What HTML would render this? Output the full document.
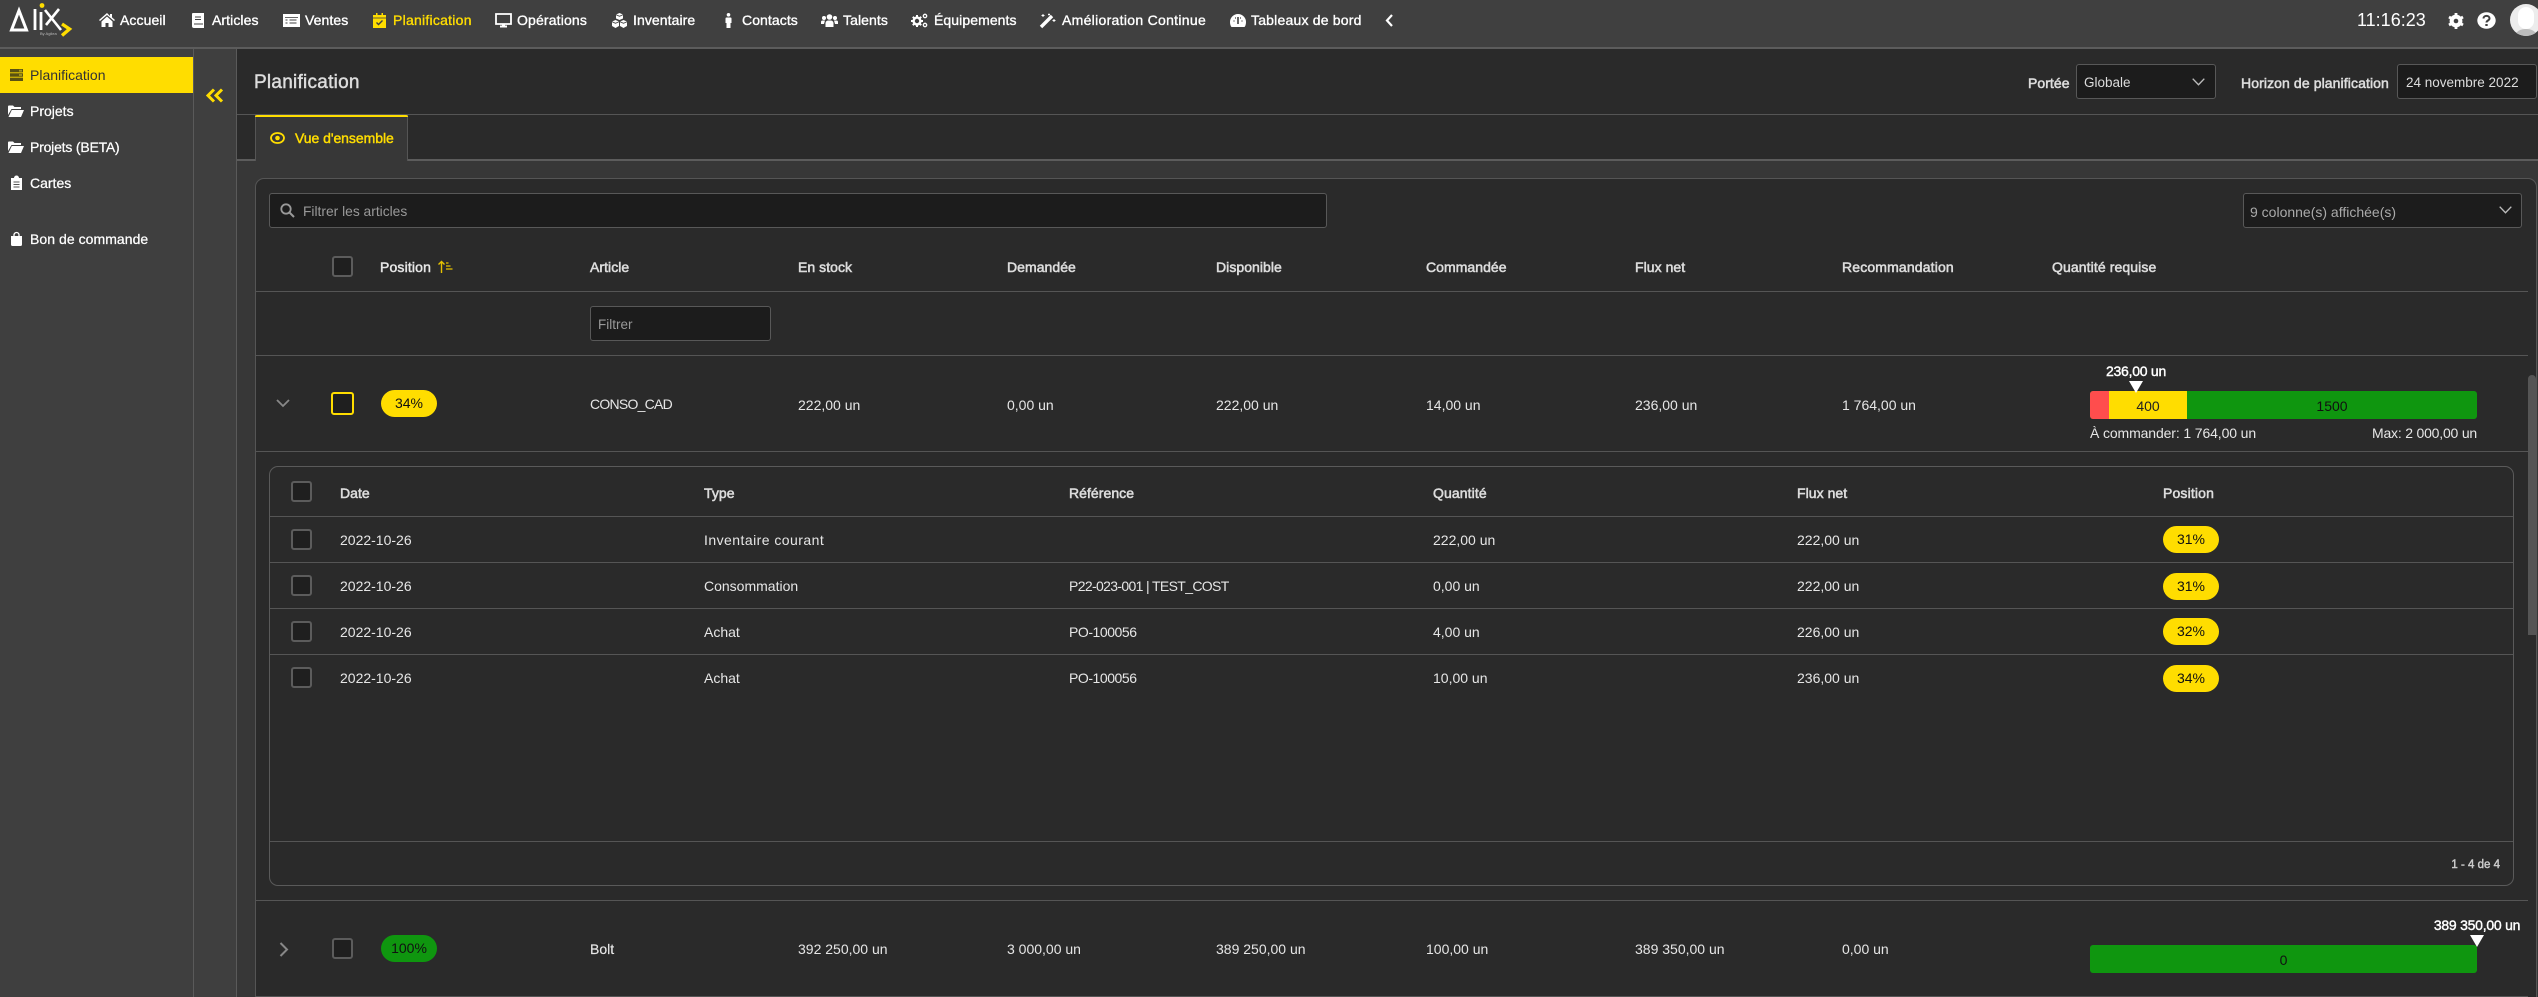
<!DOCTYPE html>
<html lang="fr"><head><meta charset="utf-8"><title>Planification</title>
<style>
html,body{margin:0;padding:0;width:2538px;height:997px;overflow:hidden;background:#2a2a2a}
body{position:relative;font-family:"Liberation Sans",sans-serif;font-size:14px;color:#e6e6e6}
div,span,svg{position:absolute;box-sizing:border-box}
.t{white-space:nowrap;line-height:20px;height:20px}
.n{color:#fff;-webkit-text-stroke:.35px #fff;top:10px;letter-spacing:.08px}
.s{color:#fff;-webkit-text-stroke:.25px #fff}
.h{color:#ddd;-webkit-text-stroke:.55px #ddd;letter-spacing:.05px}
.l{height:1px;background:#555}
.cb{width:21px;height:21px;background:#1f1f1f;border:2px solid #5c5c5c;border-radius:3px}
.b{width:56px;height:27px;border-radius:13.5px;background:#ffdd00;color:#111;text-align:center;line-height:27px}
.i{overflow:visible}
.input{background:#1c1c1c;border:1px solid #585858;border-radius:3px}
</style></head><body>

<!-- top bar -->
<div style="left:0;top:0;width:2538px;height:47px;background:#404040"></div>
<div style="left:0;top:47px;width:2538px;height:2px;background:#5c5c5c"></div>

<!-- logo -->
<svg class="i" style="left:8px;top:2px" width="66" height="36" viewBox="0 0 66 36">
<path d="M3.500 28 L11 8.500 L18.500 28 Z" fill="none" stroke="#fff" stroke-width="3"/>
<path d="M27 7V28" fill="none" stroke="#fff" stroke-width="2.800"/>
<path d="M33 10V28" fill="none" stroke="#fff" stroke-width="2.800"/>
<path d="M37 8L53 28M51 7L38 23" fill="none" stroke="#fff" stroke-width="2.600"/>
<circle cx="34" cy="3.500" r="2.400" fill="#ffdd00"/>
<path d="M54 22L61.500 27L54 33.500" fill="none" stroke="#ffdd00" stroke-width="3.400"/>
</svg>
<span class="t" style="left:40px;top:31px;font-size:4px;line-height:6px;height:6px;color:#bbb">By Agilea</span>

<!-- nav icons -->
<svg class="i" style="left:99px;top:13px" width="16" height="14" viewBox="0 0 16 14"><path d="M8 0L0 7l1 1 7-6 7 6 1-1-3-2.600V1h-2v2zM2.500 8.500V14h4v-4h3v4h4V8.500L8 3.500z" fill="#fff"/></svg>
<svg class="i" style="left:192px;top:13px" width="12" height="15" viewBox="0 0 12 15"><path d="M1 0h11v15H2a2 2 0 0 1-2-2V1a1 1 0 0 1 1-1z" fill="#fff"/><path d="M2 11h9M3 4h6M3 6.500h6" stroke="#404040" stroke-width="1"/></svg>
<svg class="i" style="left:283px;top:14px" width="17" height="13" viewBox="0 0 17 13"><path d="M0 0h17v13H0z" fill="#fff"/><path d="M2 3h13v.8H2z" fill="#404040"/><path d="M2.500 6h2M2.500 9h2M6.500 6h7M6.500 9h7" stroke="#404040" stroke-width="1.100"/></svg>
<svg class="i" style="left:373px;top:13px" width="13" height="15" viewBox="0 0 13 15"><path d="M3 0h1.500v2h4V0H10v2h3v13H0V2h3z" fill="#ffdd00"/><path d="M0 5h13" stroke="#404040" stroke-width=".8"/><path d="M3.500 9.500l2 2L9.500 7.500" stroke="#404040" stroke-width="1.400" fill="none"/></svg>
<svg class="i" style="left:495px;top:13px" width="17" height="15" viewBox="0 0 17 15"><path d="M1 1h15v10H1z" fill="none" stroke="#fff" stroke-width="1.800"/><path d="M5 13.500h7" stroke="#fff" stroke-width="2"/><path d="M7 11h3v2H7z" fill="#fff"/></svg>
<svg class="i" style="left:612px;top:13px" width="15" height="15" viewBox="0 0 15 15"><path d="M7.500 0l3.500 1.500v4L7.500 7 4 5.500v-4zM3.500 7L7 8.500v4.500L3.500 15 0 13V8.500zM11.500 7L15 8.500V13l-3.500 2L8 13V8.500z" fill="#fff"/><path d="M4 1.700l3.500 1.600L11 1.700M0 8.700l3.500 1.600L7 8.700M8 8.700l3.500 1.600L15 8.700" fill="none" stroke="#404040" stroke-width=".8"/></svg>
<svg class="i" style="left:725px;top:13px" width="7" height="15" viewBox="0 0 7 15"><circle cx="3.500" cy="1.800" r="1.800" fill="#fff"/><path d="M1.500 4.500h4a1 1 0 0 1 1 1v4.500H5.500V15h-4V10H.5V5.500a1 1 0 0 1 1-1z" fill="#fff"/></svg>
<svg class="i" style="left:821px;top:14px" width="17" height="13" viewBox="0 0 17 13"><circle cx="8.500" cy="3" r="2.800" fill="#fff"/><circle cx="3" cy="4" r="2" fill="#fff"/><circle cx="14" cy="4" r="2" fill="#fff"/><path d="M4.500 13V9a3 3 0 0 1 3-2.500h2A3 3 0 0 1 12.500 9v4zM0 10V8a1.500 1.500 0 0 1 1.500-1.500H4L3 10zM17 10V8a1.500 1.500 0 0 0-1.500-1.500H13l1 3.500z" fill="#fff"/></svg>
<svg class="i" style="left:911px;top:13px" width="17" height="15" viewBox="0 0 17 15"><circle cx="6" cy="8" r="3.400" fill="none" stroke="#fff" stroke-width="2.400"/><path d="M6 2v2M6 12v2M0 8h2M10 8h2M1.800 3.800l1.400 1.400M8.800 10.800l1.400 1.400M10.200 3.800L8.800 5.200M3.200 10.800l-1.400 1.400" stroke="#fff" stroke-width="2"/><circle cx="14" cy="3" r="1.700" fill="none" stroke="#fff" stroke-width="1.300"/><circle cx="14" cy="12" r="1.700" fill="none" stroke="#fff" stroke-width="1.300"/></svg>
<svg class="i" style="left:1040px;top:13px" width="16" height="15" viewBox="0 0 16 15"><path d="M1 14L12 3" stroke="#fff" stroke-width="3.400"/><path d="M3 1v3M1.500 2.500h3M9 .5v2M8 1.500h2M14 6v3M12.500 7.500h3" stroke="#fff" stroke-width="1"/></svg>
<svg class="i" style="left:1230px;top:13px" width="16" height="15" viewBox="0 0 16 15"><path d="M0 9a8 8 0 0 1 16 0c0 2-.5 4-1.500 5h-13C.5 13 0 11 0 9z" fill="#fff"/><path d="M8 11V4" stroke="#404040" stroke-width="1.600"/><path d="M3.500 8h1M11.500 8h1M5 5h1M10 5h1" stroke="#404040" stroke-width="1.200"/></svg>
<svg class="i" style="left:1385px;top:14px" width="8" height="13" viewBox="0 0 8 13"><path d="M7 1L2 6.500 7 12" fill="none" stroke="#fff" stroke-width="2.200"/></svg>

<span class="t n" style="left:120px">Accueil</span>
<span class="t n" style="left:212px">Articles</span>
<span class="t n" style="left:305px">Ventes</span>
<span class="t n" style="left:393px;color:#ffdd00;-webkit-text-stroke:.35px #ffdd00;letter-spacing:.25px">Planification</span>
<span class="t n" style="left:517px;letter-spacing:.15px">Opérations</span>
<span class="t n" style="left:633px">Inventaire</span>
<span class="t n" style="left:742px">Contacts</span>
<span class="t n" style="left:843px">Talents</span>
<span class="t n" style="left:934px">Équipements</span>
<span class="t n" style="left:1062px;letter-spacing:.3px">Amélioration Continue</span>
<span class="t n" style="left:1251px;letter-spacing:.2px">Tableaux de bord</span>

<span class="t" style="left:2357px;top:10px;font-size:18px;color:#fff">11:16:23</span>
<svg class="i" style="left:2447px;top:13px" width="18" height="16" viewBox="0 0 18 16"><circle cx="9" cy="8" r="4.600" fill="none" stroke="#fff" stroke-width="3.600"/><path d="M9 0v16M2 4l14 8M16 4L2 12" stroke="#fff" stroke-width="2.800"/><circle cx="9" cy="8" r="2.300" fill="#404040"/></svg>
<svg class="i" style="left:2477px;top:12px" width="19" height="17" viewBox="0 0 19 17"><ellipse cx="9.500" cy="8.500" rx="9.200" ry="8.300" fill="#fff"/><path d="M6.500 6.500c0-3.500 6-3.500 6 0 0 2-3 2-3 4" fill="none" stroke="#404040" stroke-width="2"/><path d="M8.300 12h2.400v2H8.300z" fill="#404040"/></svg>
<div style="left:2510px;top:4px;width:32px;height:32px;border-radius:50%;background:#ececec;overflow:hidden">
<div style="left:8px;top:3px;width:16px;height:22px;border-radius:8px;background:#fff"></div>
<div style="left:3px;top:25px;width:26px;height:12px;border-radius:12px 12px 0 0;background:#bdbdbd"></div></div>

<!-- sidebar -->
<div style="left:0;top:49px;width:237px;height:948px;background:#3f3f3f"></div>
<div style="left:193px;top:49px;width:1px;height:948px;background:#5a5a5a"></div>
<div style="left:236px;top:49px;width:1px;height:948px;background:#5a5a5a"></div>
<div style="left:0;top:57px;width:193px;height:36px;background:#ffdd00"></div>
<svg class="i" style="left:10px;top:69px" width="13" height="12" viewBox="0 0 13 12"><path d="M0 0h13v3.400H0zM0 4.300h13v3.400H0zM0 8.600h13V12H0z" fill="#5b5212"/><path d="M9 .8h3v1.800H9zM9 5.100h3v1.800H9z" fill="#a89a1a"/></svg>
<span class="t" style="left:30px;top:65px;color:#333">Planification</span>
<svg class="i" style="left:8px;top:105px" width="16" height="12" viewBox="0 0 16 12"><path d="M0 1.500A1 1 0 0 1 1 .5h4l1.500 1.500H13v2H3.500L0 10z" fill="#fff"/><path d="M3.800 5H16l-3 7H.5z" fill="#fff"/></svg>
<svg class="i" style="left:8px;top:141px" width="16" height="12" viewBox="0 0 16 12"><path d="M0 1.500A1 1 0 0 1 1 .5h4l1.500 1.500H13v2H3.500L0 10z" fill="#fff"/><path d="M3.800 5H16l-3 7H.5z" fill="#fff"/></svg>
<svg class="i" style="left:11px;top:176px" width="11" height="14" viewBox="0 0 11 14"><path d="M0 2h3a2.500 2.500 0 0 1 5 0h3v12H0z" fill="#fff"/><path d="M2.500 6h6M2.500 8.500h6M2.500 11h6" stroke="#555" stroke-width="1"/></svg>
<svg class="i" style="left:11px;top:232px" width="11" height="14" viewBox="0 0 11 14"><path d="M0 4h11v8.500a1.500 1.500 0 0 1-1.500 1.500h-8A1.500 1.500 0 0 1 0 12.500z" fill="#fff"/><path d="M3 5V3a2.500 2.500 0 0 1 5 0v2" fill="none" stroke="#fff" stroke-width="1.300"/></svg>
<span class="t s" style="left:30px;top:101px">Projets</span>
<span class="t s" style="left:30px;top:137px;letter-spacing:-.2px">Projets (BETA)</span>
<span class="t s" style="left:30px;top:173px">Cartes</span>
<span class="t s" style="left:30px;top:229px;letter-spacing:.05px">Bon de commande</span>
<svg class="i" style="left:206px;top:88px" width="18" height="15" viewBox="0 0 18 15"><path d="M8 1.500L2 7.500l6 6M16 1.500l-6 6 6 6" fill="none" stroke="#ffdd00" stroke-width="3"/></svg>

<!-- header -->
<span class="t h" style="left:254px;top:73px;font-size:19px;letter-spacing:.25px;-webkit-text-stroke:.45px #ddd">Planification</span>
<span class="t h" style="left:2028px;top:73px">Portée</span>
<div class="input" style="left:2076px;top:64px;width:140px;height:35px"></div>
<span class="t" style="left:2084px;top:73px;color:#ddd;font-size:13.500px">Globale</span>
<svg class="i" style="left:2192px;top:78px" width="13" height="8" viewBox="0 0 13 8"><path d="M.7.7l5.800 6 5.800-6" fill="none" stroke="#bbb" stroke-width="1.400"/></svg>
<span class="t h" style="left:2241px;top:73px;letter-spacing:.1px">Horizon de planification</span>
<div class="input" style="left:2397px;top:64px;width:140px;height:35px"></div>
<span class="t" style="left:2406px;top:73px;color:#ddd;font-size:13.500px">24 novembre 2022</span>
<div class="l" style="left:237px;top:114px;width:2301px"></div>

<!-- tabs -->
<div style="left:237px;top:161px;width:2301px;height:836px;background:#373737"></div>
<div style="left:237px;top:159px;width:2301px;height:2px;background:#5c5c5c"></div>
<div style="left:255px;top:115px;width:153px;height:46px;background:#373737;border-left:1px solid #555;border-right:1px solid #555"></div>
<div style="left:255px;top:115px;width:153px;height:2px;background:#ffdd00;border-radius:2px 2px 0 0"></div>
<svg class="i" style="left:270px;top:132px" width="15" height="12" viewBox="0 0 15 12"><ellipse cx="7.500" cy="6" rx="6.500" ry="5" fill="none" stroke="#ffdd00" stroke-width="1.800"/><circle cx="7.500" cy="6" r="2.300" fill="#ffdd00"/></svg>
<span class="t" style="left:295px;top:128px;color:#ffdd00;-webkit-text-stroke:.45px #ffdd00;letter-spacing:-.05px">Vue d'ensemble</span>

<!-- panel -->
<div style="left:255px;top:178px;width:2282px;height:830px;background:#2a2a2a;border:1px solid #555;border-radius:9px"></div>
<div class="input" style="left:269px;top:193px;width:1058px;height:35px"></div>
<svg class="i" style="left:280px;top:203px" width="15" height="15" viewBox="0 0 15 15"><circle cx="6" cy="6" r="4.700" fill="none" stroke="#999" stroke-width="1.800"/><path d="M9.500 9.500L14 14" stroke="#999" stroke-width="2"/></svg>
<span class="t" style="left:303px;top:202px;color:#999;font-size:13.800px">Filtrer les articles</span>
<div class="input" style="left:2243px;top:193px;width:279px;height:35px"></div>
<span class="t" style="left:2250px;top:202px;color:#aaa">9 colonne(s) affichée(s)</span>
<svg class="i" style="left:2499px;top:206px" width="13" height="8" viewBox="0 0 13 8"><path d="M.7.7l5.800 6 5.800-6" fill="none" stroke="#bbb" stroke-width="1.400"/></svg>

<!-- column headers -->
<div class="cb" style="left:332px;top:256px"></div>
<span class="t h" style="left:380px;top:257px;color:#eee;letter-spacing:.15px">Position</span>
<svg class="i" style="left:438px;top:261px" width="16" height="12" viewBox="0 0 16 12"><path d="M3.500 12V1M.5 3.500l3-3 3 3" fill="none" stroke="#e6c200" stroke-width="1.400"/><path d="M8 2h2.500M8 5h4.500M8 8h6.500" stroke="#e6c200" stroke-width="1.300"/></svg>
<span class="t h" style="left:590px;top:257px">Article</span>
<span class="t h" style="left:798px;top:257px">En stock</span>
<span class="t h" style="left:1007px;top:257px">Demandée</span>
<span class="t h" style="left:1216px;top:257px">Disponible</span>
<span class="t h" style="left:1426px;top:257px">Commandée</span>
<span class="t h" style="left:1635px;top:257px">Flux net</span>
<span class="t h" style="left:1842px;top:257px;letter-spacing:.15px">Recommandation</span>
<span class="t h" style="left:2052px;top:257px;letter-spacing:.1px">Quantité requise</span>
<div class="l" style="left:256px;top:291px;width:2272px"></div>
<div class="input" style="left:590px;top:306px;width:181px;height:35px"></div>
<span class="t" style="left:598px;top:315px;color:#999;font-size:13.500px">Filtrer</span>
<div class="l" style="left:256px;top:355px;width:2272px"></div>

<!-- row 1 -->
<svg class="i" style="left:276px;top:399px" width="14" height="9" viewBox="0 0 14 9"><path d="M1 1l6 6 6-6" fill="none" stroke="#888" stroke-width="1.800"/></svg>
<div class="cb" style="left:331px;top:392px;width:23px;height:23px;border-color:#ffdd00"></div>
<div class="b" style="left:381px;top:390px">34%</div>
<span class="t" style="left:590px;top:394px;letter-spacing:-.75px">CONSO_CAD</span>
<span class="t" style="left:798px;top:395px">222,00 un</span>
<span class="t" style="left:1007px;top:395px">0,00 un</span>
<span class="t" style="left:1216px;top:395px">222,00 un</span>
<span class="t" style="left:1426px;top:395px">14,00 un</span>
<span class="t" style="left:1635px;top:395px">236,00 un</span>
<span class="t" style="left:1842px;top:395px">1 764,00 un</span>

<span class="t" style="left:2036px;width:200px;text-align:center;top:361px;color:#fff;-webkit-text-stroke:.4px #fff;letter-spacing:-.25px">236,00 un</span>
<div style="left:2090px;top:391px;width:387px;height:28px;background:#0f960f;border-radius:3px;overflow:hidden">
<div style="left:0;top:0;width:19px;height:28px;background:#ff4d4d"></div>
<div style="left:19px;top:0;width:78px;height:28px;background:#ffdd00"></div></div>
<svg class="i" style="left:2129px;top:381px" width="14" height="12" viewBox="0 0 14 12"><path d="M0 0h14L7 12z" fill="#fff"/></svg>
<span class="t" style="left:2109px;width:78px;text-align:center;top:396px;color:#222">400</span>
<span class="t" style="left:2187px;width:290px;text-align:center;top:396px;color:#111">1500</span>
<span class="t" style="left:2090px;top:423px;letter-spacing:-.12px">À commander: 1 764,00 un</span>
<span class="t" style="right:61px;top:423px;letter-spacing:-.2px">Max: 2 000,00 un</span>
<div class="l" style="left:256px;top:451px;width:2272px"></div>

<!-- sub table -->
<div style="left:269px;top:466px;width:2245px;height:420px;border:1px solid #5a5a5a;border-radius:9px"></div>
<div class="cb" style="left:291px;top:481px"></div>
<span class="t h" style="left:340px;top:483px">Date</span>
<span class="t h" style="left:704px;top:483px">Type</span>
<span class="t h" style="left:1069px;top:483px">Référence</span>
<span class="t h" style="left:1433px;top:483px;letter-spacing:.1px">Quantité</span>
<span class="t h" style="left:1797px;top:483px">Flux net</span>
<span class="t h" style="left:2163px;top:483px;letter-spacing:.15px">Position</span>
<div class="l" style="left:270px;top:516px;width:2243px"></div>

<div class="cb" style="left:291px;top:529px"></div>
<span class="t" style="left:340px;top:530px">2022-10-26</span>
<span class="t" style="left:704px;top:530px;letter-spacing:.45px">Inventaire courant</span>
<span class="t" style="left:1433px;top:530px">222,00 un</span>
<span class="t" style="left:1797px;top:530px">222,00 un</span>
<div class="b" style="left:2163px;top:526px">31%</div>
<div class="l" style="left:270px;top:562px;width:2243px"></div>

<div class="cb" style="left:291px;top:575px"></div>
<span class="t" style="left:340px;top:576px">2022-10-26</span>
<span class="t" style="left:704px;top:576px">Consommation</span>
<span class="t" style="left:1069px;top:576px;letter-spacing:-.65px">P22-023-001 | TEST_COST</span>
<span class="t" style="left:1433px;top:576px">0,00 un</span>
<span class="t" style="left:1797px;top:576px">222,00 un</span>
<div class="b" style="left:2163px;top:573px">31%</div>
<div class="l" style="left:270px;top:608px;width:2243px"></div>

<div class="cb" style="left:291px;top:621px"></div>
<span class="t" style="left:340px;top:622px">2022-10-26</span>
<span class="t" style="left:704px;top:622px">Achat</span>
<span class="t" style="left:1069px;top:622px;letter-spacing:-.45px">PO-100056</span>
<span class="t" style="left:1433px;top:622px">4,00 un</span>
<span class="t" style="left:1797px;top:622px">226,00 un</span>
<div class="b" style="left:2163px;top:618px">32%</div>
<div class="l" style="left:270px;top:654px;width:2243px"></div>

<div class="cb" style="left:291px;top:667px"></div>
<span class="t" style="left:340px;top:668px">2022-10-26</span>
<span class="t" style="left:704px;top:668px">Achat</span>
<span class="t" style="left:1069px;top:668px;letter-spacing:-.45px">PO-100056</span>
<span class="t" style="left:1433px;top:668px">10,00 un</span>
<span class="t" style="left:1797px;top:668px">236,00 un</span>
<div class="b" style="left:2163px;top:665px">34%</div>

<div class="l" style="left:270px;top:841px;width:2243px"></div>
<span class="t" style="right:38px;top:855px;font-size:11.500px;color:#ccc;-webkit-text-stroke:.45px #ccc">1 - 4 de 4</span>
<div class="l" style="left:256px;top:900px;width:2272px"></div>

<!-- row 2 -->
<svg class="i" style="left:279px;top:942px" width="10" height="15" viewBox="0 0 10 15"><path d="M1.500 1l6.500 6.500-6.500 6.500" fill="none" stroke="#888" stroke-width="2"/></svg>
<div class="cb" style="left:332px;top:938px"></div>
<div class="b" style="left:381px;top:935px;background:#0f960f">100%</div>
<span class="t" style="left:590px;top:939px;-webkit-text-stroke:.15px #eee">Bolt</span>
<span class="t" style="left:798px;top:939px">392 250,00 un</span>
<span class="t" style="left:1007px;top:939px">3 000,00 un</span>
<span class="t" style="left:1216px;top:939px">389 250,00 un</span>
<span class="t" style="left:1426px;top:939px">100,00 un</span>
<span class="t" style="left:1635px;top:939px">389 350,00 un</span>
<span class="t" style="left:1842px;top:939px">0,00 un</span>
<span class="t" style="left:2377px;width:200px;text-align:center;top:915px;color:#fff;-webkit-text-stroke:.4px #fff;letter-spacing:-.25px">389 350,00 un</span>
<svg class="i" style="left:2470px;top:935px" width="14" height="12" viewBox="0 0 14 12"><path d="M0 0h14L7 12z" fill="#fff"/></svg>
<div style="left:2090px;top:945px;width:387px;height:28px;background:#0f960f;border-radius:3px"></div>
<span class="t" style="left:2090px;width:387px;text-align:center;top:950px;color:#111">0</span>
<div class="l" style="left:256px;top:996px;width:2272px"></div>

<!-- scrollbar -->
<div style="left:2528px;top:375px;width:8px;height:260px;background:#555;border-radius:4px 4px 0 0"></div>
</body></html>
